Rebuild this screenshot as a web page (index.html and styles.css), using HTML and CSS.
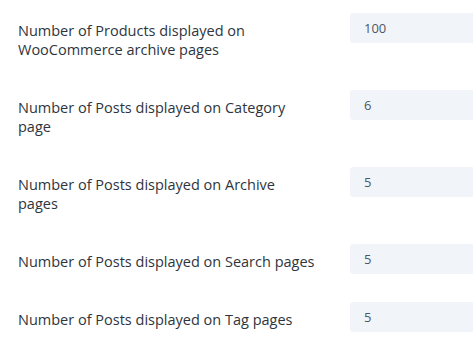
FILE: index.html
```html
<!DOCTYPE html>
<html>
<head>
<meta charset="utf-8">
<link rel="stylesheet" href="styles.css">
</head>
<body>
<div class="settings">
  <div class="row">
    <label class="label">Number of Products displayed on WooCommerce archive pages</label>
    <div class="field">100</div>
  </div>
  <div class="row">
    <label class="label">Number of Posts displayed on Category page</label>
    <div class="field">6</div>
  </div>
  <div class="row">
    <label class="label">Number of Posts displayed on Archive pages</label>
    <div class="field">5</div>
  </div>
  <div class="row">
    <label class="label">Number of Posts displayed on Search pages</label>
    <div class="field">5</div>
  </div>
  <div class="row">
    <label class="label">Number of Posts displayed on Tag pages</label>
    <div class="field">5</div>
  </div>
</div>
</body>
</html>
```

FILE: styles.css
```css
html, body {
  margin: 0;
  padding: 0;
  background: #ffffff;
}
.settings {
  padding: 13px 0 0 18px;
  font-family: "Open Sans", "Noto Sans", sans-serif;
}
.row {
  display: flex;
  align-items: flex-start;
  margin-bottom: 28px;
}
.label {
  width: 298px;
  padding: 8px 0 3px;
  margin-right: 34px;
  font-size: 14.5px;
  line-height: 19px;
  color: #2e353d;
}
.field {
  flex: 1;
  height: 30px;
  box-sizing: border-box;
  padding: 5px 14px;
  background: #f1f5f9;
  border-radius: 3px 0 0 3px;
  font-size: 13px;
  line-height: 20px;
  color: #4c5866;
}
```
